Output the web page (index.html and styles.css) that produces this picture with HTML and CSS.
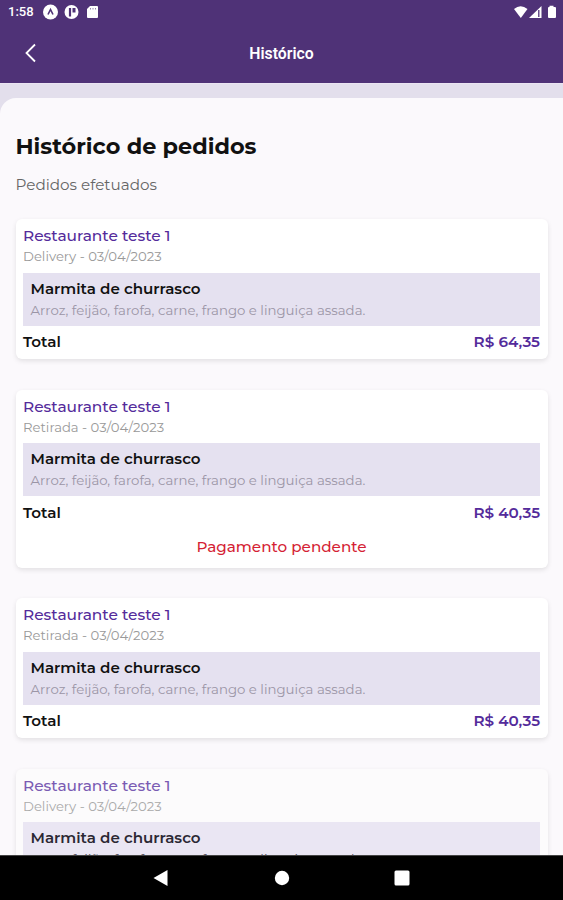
FILE: index.html
```
<!DOCTYPE html>
<html lang="pt-BR">

<head>
	<meta charset="utf-8">
	<title>Histórico</title>
	<link rel="stylesheet" href="styles.css">
</head>

<body>
	<header class="topbar">
		<div class="status">
			<span class="clock">1:58</span>
			<svg class="status-left" width="58" height="16" viewBox="0 0 58 16">
				<circle cx="7.500" cy="8" r="7.500" fill="#fff"/>
				<path d="M5 10.500 7.500 5.500l2.500 5" fill="none" stroke="#4f3277" stroke-width="1.600"/>
				<circle cx="28.500" cy="8" r="7" fill="#fff"/>
				<path d="M27 12.500V4" fill="none" stroke="#4f3277" stroke-width="2.200"/>
				<path d="M29.500 4h3v4.500h-3z" fill="#4f3277"/>
				<path d="M47 2h7q1 0 1 1v10q0 1-1 1h-9q-1 0-1-1V5z" fill="#fff"/>
				<path d="M47.500 4v1.500M50 4v1.500M52.500 4v1.500" stroke="#4f3277" stroke-width=".6"/>
			</svg>
			<svg class="status-right" width="44" height="14" viewBox="0 0 44 14">
				<path d="M1 4Q7.500-1.500 14.500 4L7.800 13z" fill="#fff"/>
				<path d="M16 13 28.500 1v12z" fill="#fff"/>
				<path d="M25.800 5v7" stroke="#4f3277" stroke-width="1.300"/>
				<path d="M36.500 2V.8h4V2h1.500q1 0 1 1v9q0 1-1 1h-6q-1 0-1-1V3q0-1 1-1z" fill="#fff"/>
			</svg>
		</div>
		<div class="nav">
			<svg class="back" width="12" height="20" viewBox="0 0 12 20">
				<path d="M10 1.500 1.500 10l8.500 8.500" fill="none" stroke="#fff" stroke-width="1.800"/>
			</svg>
			<span class="nav-title">Histórico</span>
		</div>
	</header>
	<main class="sheet">
		<h1>Histórico de pedidos</h1>
		<p class="subtitle">Pedidos efetuados</p>

		<section class="card">
			<h2>Restaurante teste 1</h2>
			<p class="info">Delivery - 03/04/2023</p>
			<div class="item">
				<h3>Marmita de churrasco</h3>
				<p>Arroz, feijão, farofa, carne, frango e linguiça assada.</p>
			</div>
			<div class="total"><span>Total</span><span class="price">R$ 64,35</span></div>
		</section>

		<section class="card">
			<h2>Restaurante teste 1</h2>
			<p class="info">Retirada - 03/04/2023</p>
			<div class="item">
				<h3>Marmita de churrasco</h3>
				<p>Arroz, feijão, farofa, carne, frango e linguiça assada.</p>
			</div>
			<div class="total"><span>Total</span><span class="price">R$ 40,35</span></div>
			<p class="pending">Pagamento pendente</p>
		</section>

		<section class="card">
			<h2>Restaurante teste 1</h2>
			<p class="info">Retirada - 03/04/2023</p>
			<div class="item">
				<h3>Marmita de churrasco</h3>
				<p>Arroz, feijão, farofa, carne, frango e linguiça assada.</p>
			</div>
			<div class="total"><span>Total</span><span class="price">R$ 40,35</span></div>
		</section>

		<section class="card loading">
			<h2>Restaurante teste 1</h2>
			<p class="info">Delivery - 03/04/2023</p>
			<div class="item">
				<h3>Marmita de churrasco</h3>
				<p>Arroz, feijão, farofa, carne, frango e linguiça assada.</p>
			</div>
		</section>
	</main>
	<footer class="android">
		<svg width="16" height="18" viewBox="0 0 16 18"><path d="M.5 9 14.500 1v16z" fill="#fff"/></svg>
		<svg width="16" height="16" viewBox="0 0 16 16"><circle cx="8" cy="8" r="7.200" fill="#fff"/></svg>
		<svg width="16" height="16" viewBox="0 0 16 16"><rect x=".5" y=".5" width="15" height="15" rx="1.500" fill="#fff"/></svg>
	</footer>
</body>

</html>
```
FILE: styles.css
```
* {
	box-sizing: border-box;
}
body {
	margin: 0;
	height: 900px;
	overflow: hidden;
	display: flex;
	flex-direction: column;
	background: #e3dfec;
	font-family: Montserrat, Inter, "Liberation Sans", sans-serif;
	font-size: 15.2px;
	color: #111;
}
h1, h2, h3, p {
	margin: 0;
}
.topbar {
	flex: none;
	height: 84px;
	border-bottom: 1px solid #eae4f2;
	background: #4f3277;
	color: #fff;
}
.status {
	display: flex;
	align-items: center;
	height: 24px;
	padding: 0 6px 0 8px;
}
.clock {
	width: 35px;
	font: 500 13px/24px Roboto, sans-serif;
}
.status-right {
	margin-left: auto;
}
.nav {
	display: grid;
	grid-template-columns: 1fr auto 1fr;
	align-items: center;
	height: 58px;
	padding: 0 25px;
}
.nav-title {
	padding-top: 1px;
	font: 600 15.8px/20px Roboto, sans-serif;
}
.sheet {
	flex: 1;
	min-height: 0;
	overflow: hidden;
	margin-top: 14px;
	padding: 34px 15px 0 15.500px;
	background: #fbf9fc;
	border-top-left-radius: 16px;
}
h1 {
	font-size: 22.4px;
	line-height: 28px;
	font-weight: 700;
}
.subtitle {
	margin: 15px 0 24px;
	line-height: 20px;
	color: #666;
}
.card {
	height: 140px;
	margin-bottom: 30.500px;
	padding: 6px 8px 0 7.500px;
	background: #fff;
	border-radius: 6px;
	box-shadow: 0 2px 5px rgba(0, 0, 0, 0.1);
}
.card:has(.pending) {
	height: 178px;
}
h2 {
	font-size: 15.4px;
	line-height: 21px;
	font-weight: 500;
	color: #542b9b;
}
.info {
	font-size: 13.2px;
	line-height: 21px;
	color: #999;
}
.item {
	height: 53px;
	margin-top: 5.500px;
	padding: 5px 8px 0 7.500px;
	background: #e5e1f0;
}
h3 {
	font-size: 15.1px;
	line-height: 21px;
	font-weight: 600;
}
.item p {
	font-size: 13.3px;
	line-height: 22px;
	color: #9b95a6;
}
.total {
	display: flex;
	justify-content: space-between;
	margin-top: 5.500px;
	line-height: 21px;
	font-weight: 600;
}
.price {
	color: #542b9b;
}
.pending {
	margin-top: 13px;
	text-align: center;
	line-height: 21px;
	font-weight: 500;
	color: #d51f35;
}
.loading {
	background: #fcfbfc;
}
.loading h2 {
	color: #7a5bb3;
}
.loading .info {
	color: #aaa;
}
.loading .item {
	background: #eae6f3;
}
.loading h3 {
	color: #2b2833;
}
.loading .item p {
	color: #55505f;
}
.android {
	flex: none;
	display: flex;
	justify-content: center;
	align-items: center;
	gap: 104.500px;
	height: 45px;
	border-top: 1px solid #444;
	background: #000;
}
```
